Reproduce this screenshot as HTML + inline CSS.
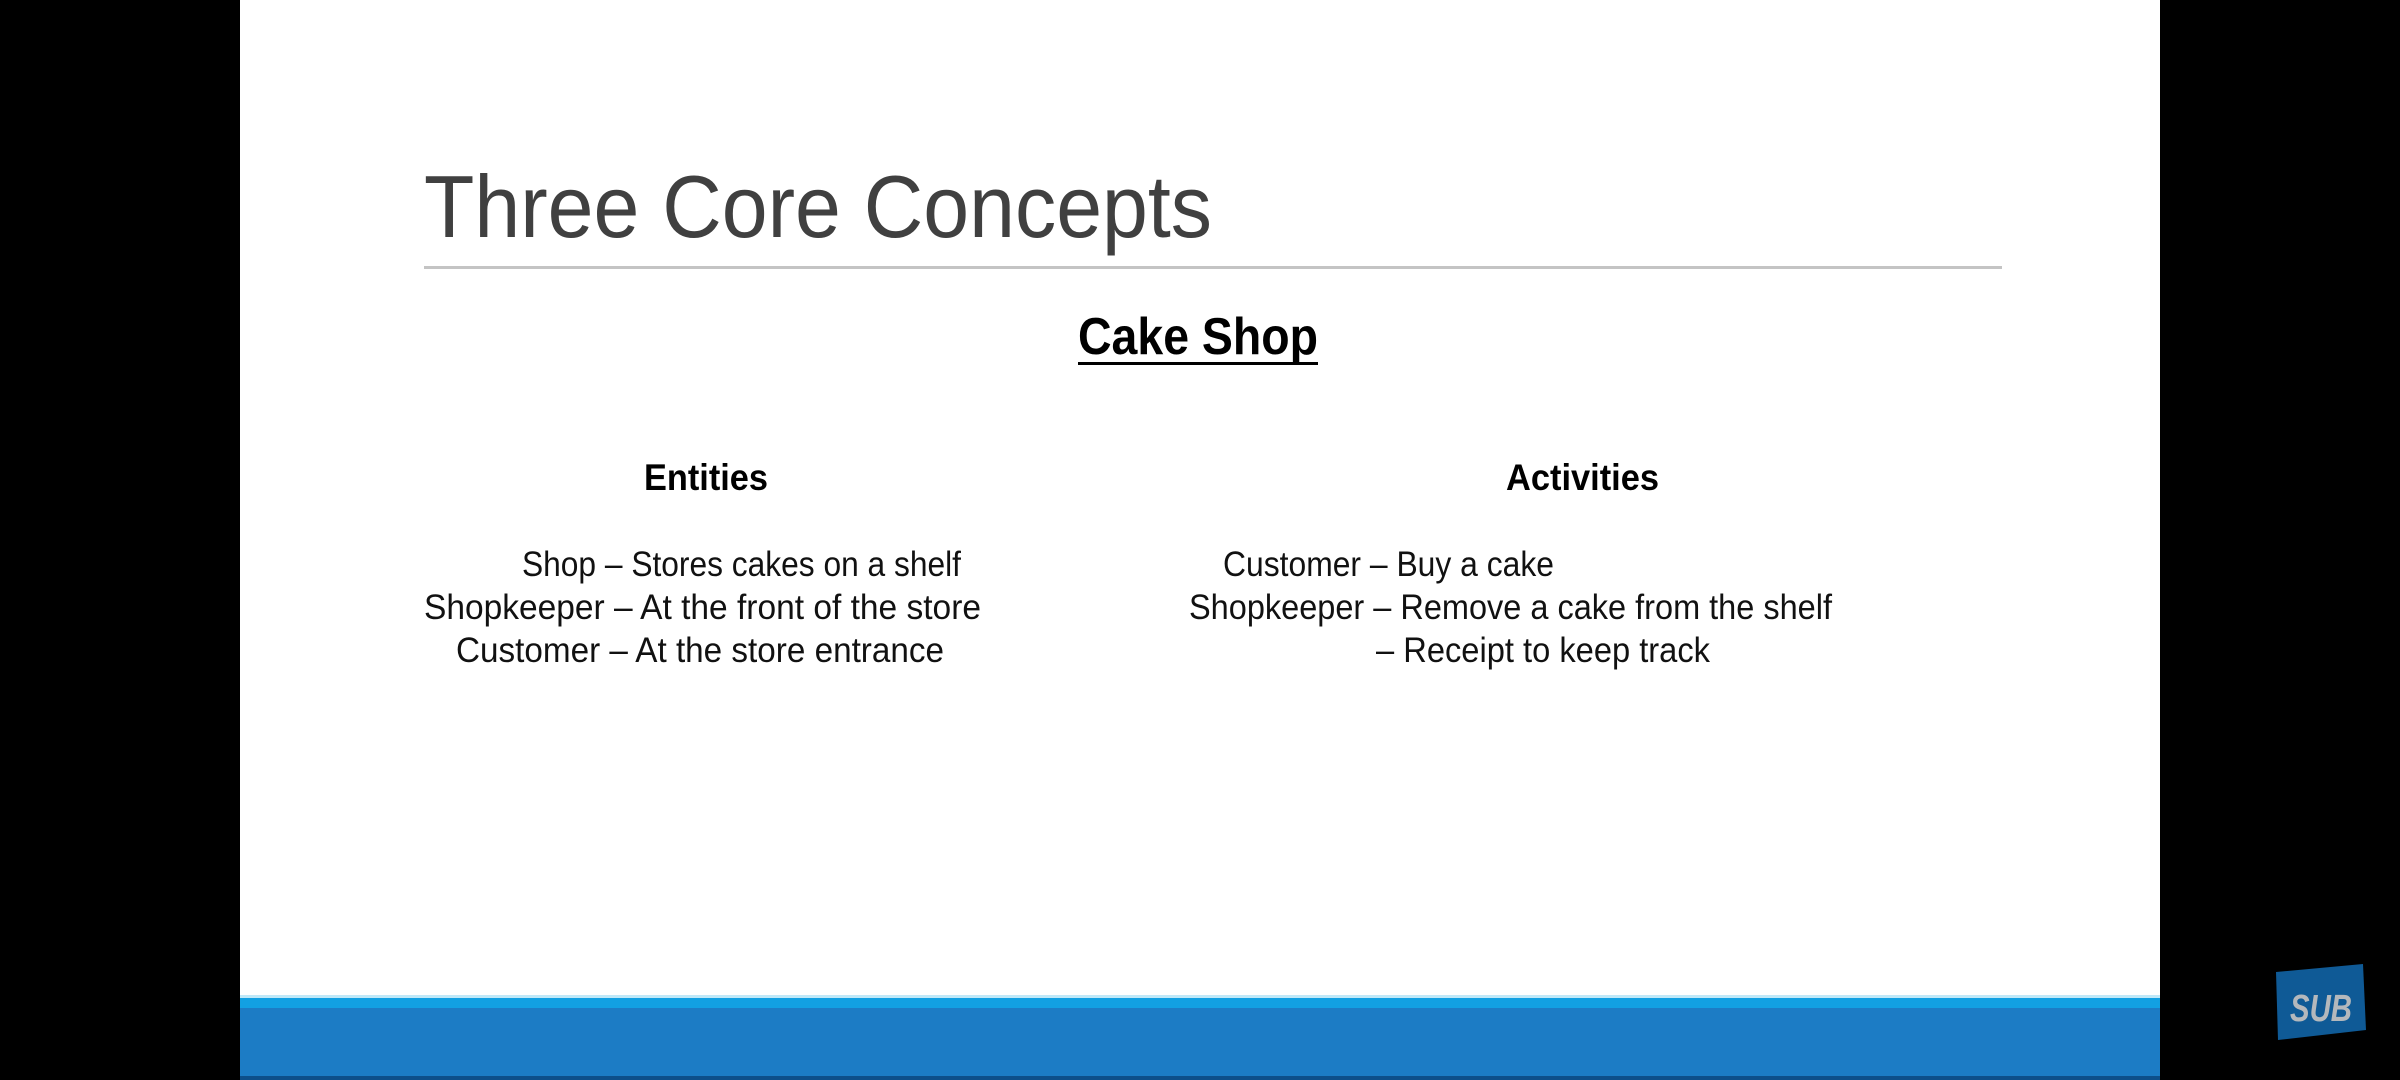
<!DOCTYPE html>
<html><head><meta charset="utf-8"><style>
html,body{margin:0;padding:0;background:#000;width:2400px;height:1080px;overflow:hidden}
svg{display:block}
</style></head><body>
<svg width="2400" height="1080" viewBox="0 0 2400 1080" xmlns="http://www.w3.org/2000/svg">
<rect x="0" y="0" width="2400" height="1080" fill="#000"/>
<rect x="240" y="0" width="1920" height="1080" fill="#fff"/>
<rect x="240" y="995" width="1920" height="85" fill="#1c7cc5"/>
<rect x="240" y="995" width="1920" height="3" fill="#bfe8f8"/>
<rect x="240" y="998" width="1920" height="10" fill="#12a0e2"/>
<rect x="240" y="1076" width="1920" height="4" fill="#0d4f8a"/>
<g font-family="Liberation Sans, sans-serif">
<text x="424" y="237" font-size="88" fill="#404040" textLength="788" lengthAdjust="spacingAndGlyphs">Three Core Concepts</text>
<rect x="424" y="266" width="1578" height="3" fill="#c4c4c4"/>
<text x="1078" y="354" font-size="52" font-weight="bold" fill="#000" textLength="240" lengthAdjust="spacingAndGlyphs">Cake Shop</text>
<rect x="1078" y="362" width="240" height="3" fill="#000"/>
<text x="644" y="490" font-size="37" font-weight="bold" fill="#000" textLength="124" lengthAdjust="spacingAndGlyphs">Entities</text>
<text x="1506" y="490" font-size="37" font-weight="bold" fill="#000" textLength="153" lengthAdjust="spacingAndGlyphs">Activities</text>
<g font-size="35" fill="#111">
<text x="522" y="576" textLength="439" lengthAdjust="spacingAndGlyphs">Shop – Stores cakes on a shelf</text>
<text x="424" y="619" textLength="557" lengthAdjust="spacingAndGlyphs">Shopkeeper – At the front of the store</text>
<text x="456" y="662" textLength="488" lengthAdjust="spacingAndGlyphs">Customer – At the store entrance</text>
<text x="1223" y="576" textLength="331" lengthAdjust="spacingAndGlyphs">Customer – Buy a cake</text>
<text x="1189" y="619" textLength="643" lengthAdjust="spacingAndGlyphs">Shopkeeper – Remove a cake from the shelf</text>
<text x="1376" y="662" textLength="334" lengthAdjust="spacingAndGlyphs">– Receipt to keep track</text>
</g>
</g>
<path d="M2276 972 L2363 964 L2366 1030 L2278 1040 Z" fill="#0f5a96"/>
<text x="2290" y="1021" font-family="Liberation Sans, sans-serif" font-size="38" font-weight="bold" font-style="italic" fill="#b4b8bc" textLength="62" lengthAdjust="spacingAndGlyphs">SUB</text>
</svg>
</body></html>
